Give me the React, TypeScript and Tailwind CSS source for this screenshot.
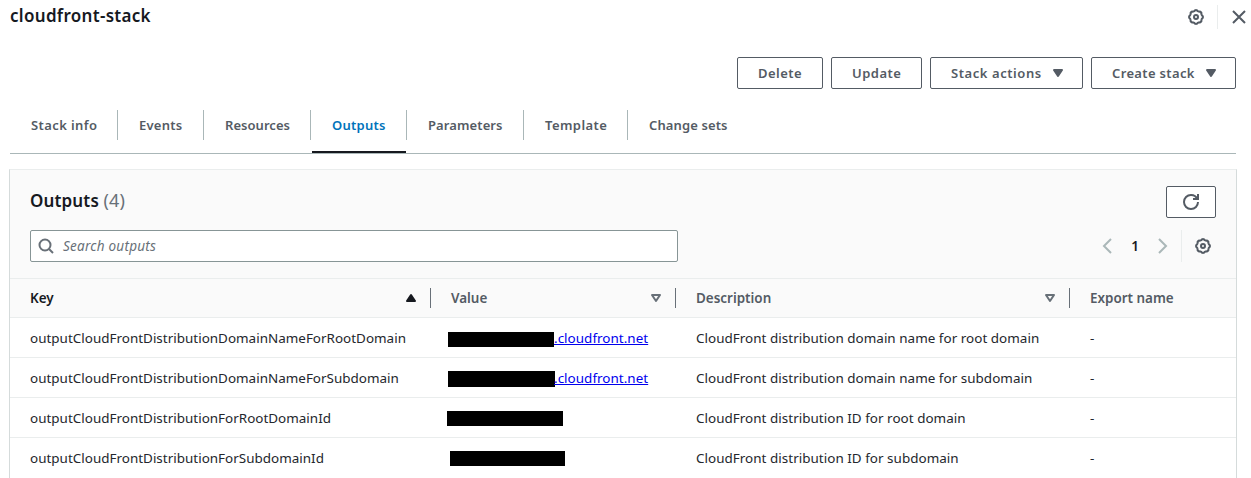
import type { ReactNode } from "react";

const gearPoints = Array.from({ length: 96 }, (_, i) => {
  const a = (i / 96) * Math.PI * 2;
  const r = 6.5 + 0.4 * Math.tanh(2 * Math.cos(8 * a));
  return `${(8 + r * Math.cos(a)).toFixed(2)},${(8 + r * Math.sin(a)).toFixed(2)}`;
}).join(" ");

function GearIcon() {
  return (
    <svg className="size-4" viewBox="0 0 16 16" fill="none" stroke="#545b64" strokeWidth="2" strokeLinejoin="round">
      <polygon points={gearPoints} />
      <circle cx="8" cy="8" r="2" />
    </svg>
  );
}

function CloseIcon() {
  return (
    <svg className="size-4" viewBox="0 0 16 16" fill="none" stroke="#545b64" strokeWidth="2">
      <path d="M2 2l12 12M14 2L2 14" />
    </svg>
  );
}

function RefreshIcon() {
  return (
    <svg className="size-4" viewBox="0 0 16 16" fill="none" stroke="#545b64" strokeWidth="2">
      <path d="M10 5h5V0" />
      <path d="M15 8a6.96 6.96 0 0 1-7 7 6.96 6.96 0 0 1-7-7 6.96 6.96 0 0 1 7-7 6.87 6.87 0 0 1 6.3 4" />
    </svg>
  );
}

function SearchIcon() {
  return (
    <svg className="size-4 shrink-0" viewBox="0 0 16 16" fill="none" stroke="#687078" strokeWidth="2">
      <circle cx="7" cy="7" r="5.5" />
      <path d="M11 11l4 4" />
    </svg>
  );
}

function Chevron({ direction }: { direction: "left" | "right" }) {
  return (
    <svg className="size-4" viewBox="0 0 16 16" fill="none" stroke="#aab7b8" strokeWidth="2">
      <path d={direction === "left" ? "M12 1L5 8l7 7" : "M4 1l7 7-7 7"} />
    </svg>
  );
}

function CaretDown() {
  return (
    <svg className="size-4" viewBox="0 0 16 16" fill="#545b64" stroke="#545b64" strokeWidth="2" strokeLinejoin="round">
      <path d="M4 5h8l-4 6z" />
    </svg>
  );
}

function SortIcon({ sorted }: { sorted: boolean }) {
  return sorted ? (
    <svg className="size-4" viewBox="0 0 16 16" fill="#16191f" stroke="#16191f" strokeWidth="2" strokeLinejoin="round">
      <path d="M4 11h8L8 5z" />
    </svg>
  ) : (
    <svg className="size-4" viewBox="0 0 16 16" fill="none" stroke="#687078" strokeWidth="2" strokeLinejoin="round">
      <path d="M4 5h8l-4 6z" />
    </svg>
  );
}

function Button({ className, caret, children }: { className: string; caret?: boolean; children: ReactNode }) {
  return (
    <button
      className={`flex h-8 items-center rounded-[2px] border border-[#545b64] bg-white pl-5 text-[13px] font-semibold text-[#545b64] ${className}`}
    >
      <span className="pt-[2px] whitespace-nowrap">{children}</span>
      {caret && <span className="ml-2"><CaretDown /></span>}
    </button>
  );
}

const tabs = [
  { label: "Stack info", className: "w-[108px] tracking-[0.4px]" },
  { label: "Events", className: "w-[86px] tracking-[0.25px]" },
  { label: "Resources", className: "w-[107px] tracking-[0.05px]" },
  { label: "Outputs", className: "w-[96px] tracking-[0.25px]" },
  { label: "Parameters", className: "w-[117px] tracking-[0.1px]" },
  { label: "Template", className: "w-[104px] tracking-[0.42px]" },
  { label: "Change sets", className: "w-[120px] tracking-[0.12px]" },
];

const columns = [
  { label: "Key", sorted: true },
  { label: "Value", sorted: false },
  { label: "Description", sorted: false },
  { label: "Export name" },
];

const rows = [
  {
    key: "outputCloudFrontDistributionDomainNameForRootDomain",
    mask: "-ml-[3px] mt-[14px] h-[15px] w-[106px]",
    link: true,
    description: "CloudFront distribution domain name for root domain",
  },
  {
    key: "outputCloudFrontDistributionDomainNameForSubdomain",
    mask: "-ml-[3px] mt-[13px] h-4 w-[107px] -mr-px",
    link: true,
    description: "CloudFront distribution domain name for subdomain",
  },
  {
    key: "outputCloudFrontDistributionForRootDomainId",
    mask: "-ml-[4px] mt-[13px] h-[15px] w-[116px]",
    link: false,
    description: "CloudFront distribution ID for root domain",
  },
  {
    key: "outputCloudFrontDistributionForSubdomainId",
    mask: "-ml-[1px] mt-[13px] h-[15px] w-[115px]",
    link: false,
    description: "CloudFront distribution ID for subdomain",
  },
];

const gridColumns = "grid grid-cols-[421px_245px_394px_1fr]";

export default function App() {
  return (
    <div className="h-[478px] overflow-hidden bg-white font-['Noto_Sans',sans-serif] text-[13.45px] text-[#16191f]">
      <header className="flex h-[57px] items-start justify-between pl-[10px] pr-1">
        <h1 className="mt-[4px] text-[17px] leading-6 font-semibold tracking-[0.3px]">cloudfront-stack</h1>
        <div className="mt-[5px] flex h-6 items-center">
          <GearIcon />
          <div className="ml-[13px] mr-[13px] h-6 w-px bg-[#eaeded]" />
          <CloseIcon />
        </div>
      </header>

      <div className="flex justify-end gap-2 pr-[15px]">
        <Button className="w-[86px] tracking-[0.45px]">Delete</Button>
        <Button className="w-[91px] tracking-[0.5px]">Update</Button>
        <Button className="w-[153px] tracking-[0.57px]" caret>Stack actions</Button>
        <Button className="w-[145px] tracking-[0.35px]" caret>Create stack</Button>
      </div>

      <nav className="mt-[9px] mr-[15px] ml-[10px] flex h-14 border-b border-[#aab7b8] text-[13px] font-semibold">
        {tabs.map((tab) => {
          const active = tab.label === "Outputs";
          return (
            <div key={tab.label} className={`flex flex-col justify-between ${tab.className}`}>
              <div
                className={`mt-3 flex h-[30px] items-center pt-[2px] pl-[21px] ${tab.label === "Change sets" ? "" : "border-r border-[#aab7b8]"} ${active ? "text-[#0073bb]" : "text-[#545b64]"}`}
              >
                {tab.label}
              </div>
              {active && <div className="mr-px ml-px h-[2px] bg-[#16191f]" />}
            </div>
          );
        })}
      </nav>

      <section className="mt-[15px] mr-[14px] ml-[9px] h-80 border-x border-t border-x-[#d5dbdb] border-t-[#eaeded]">
        <div className="h-[108px] bg-[#fafafa] px-5 pt-4">
          <div className="flex items-start justify-between">
            <h2 className="mt-[2px] text-[17px] leading-6 font-semibold tracking-[0.15px]">
              Outputs <span className="text-[18px] font-normal text-[#687078]">(4)</span>
            </h2>
            <button className="flex h-8 w-[50px] items-center justify-center rounded-[2px] border border-[#545b64] bg-white">
              <RefreshIcon />
            </button>
          </div>
          <div className="mt-3 flex items-center">
            <div className="flex h-8 w-[648px] items-center rounded-[2px] border border-[#879596] bg-white pl-[7px]">
              <SearchIcon />
              <span className="ml-[9px] text-[13.5px] tracking-[0.25px] text-[#687078] italic">Search outputs</span>
            </div>
            <div className="ml-auto flex h-8 items-center">
              <Chevron direction="left" />
              <span className="w-10 pt-px text-center text-[13.5px] font-semibold">1</span>
              <Chevron direction="right" />
              <div className="mr-[13px] ml-[10px] h-8 w-px bg-[#eaeded]" />
              <span className="mr-[5px]"><GearIcon /></span>
            </div>
          </div>
        </div>

        <div className={`${gridColumns} h-10 border-y border-[#eaeded] bg-[#fafafa]`}>
          {columns.map((column) => (
            <div
              key={column.label}
              className={`my-[9px] flex h-5 items-center justify-between pl-5 font-semibold ${column.sorted ? "text-[#16191f]" : "text-[#545b64]"} ${column.sorted === undefined ? "" : "border-r border-[#687078] pr-[11px]"}`}
            >
              {column.label}
              {column.sorted !== undefined && <SortIcon sorted={column.sorted} />}
            </div>
          ))}
        </div>

        {rows.map((row) => (
          <div
            key={row.key}
            className={`${gridColumns} h-10 items-center border-b border-[#eaeded] text-[#24272d] last:border-transparent`}
          >
            <div className="pt-[2px] pl-5 tracking-[0.01px]">{row.key}</div>
            <div className="flex h-full items-start pl-5">
              <span className={`bg-black ${row.mask}`} />
              {row.link && <a className="self-center pt-[2px] tracking-[0.03px] text-[#0000ee] underline">.cloudfront.net</a>}
            </div>
            <div className="pt-[2px] pl-5 tracking-[0.03px]">{row.description}</div>
            <div className="pt-[2px] pl-5">-</div>
          </div>
        ))}
      </section>
    </div>
  );
}
